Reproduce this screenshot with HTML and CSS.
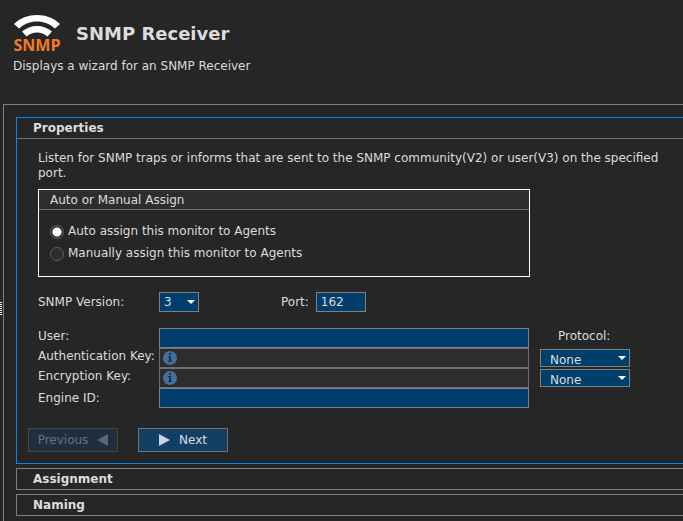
FILE: index.html
```html
<!DOCTYPE html>
<html lang="en">

<head>
  <meta charset="UTF-8" />
  <meta name="viewport" content="width=device-width, initial-scale=1.0" />
  <title>SNMP Receiver</title>
  <link rel="stylesheet" href="styles.css">
</head>

<body>

  <header class="page-header">
    <div class="brand">
      <svg class="logo" width="50" height="40" viewBox="0 0 50 40" aria-hidden="true">
        <path d="M1 10C13 -2 35 -2 47 10L42 14.500C32 5 16 5 6 14.500z" fill="#fff" />
        <path d="M9 17.500C17 10 31 10 39 17.500L34.500 22.500C28 17 20 17 13.500 22.500z" fill="#fff" />
        <text class="logo-text" x="24" y="37" text-anchor="middle">SNMP</text>
      </svg>
      <h1>SNMP Receiver</h1>
    </div>
    <p>Displays a wizard for an SNMP Receiver</p>
  </header>

  <main class="workspace">
    <div class="grip"></div>
    <form class="wizard">

      <section class="step active">
        <h2><button type="button" class="step-title">Properties</button></h2>
        <div class="step-body">
          <p class="intro">Listen for SNMP traps or informs that are sent to the SNMP community(V2) or user(V3) on the specified port.</p>

          <fieldset class="assign">
            <legend>Auto or Manual Assign</legend>
            <div class="options">
              <label><input type="radio" name="assign" checked>Auto assign this monitor to Agents</label>
              <label><input type="radio" name="assign">Manually assign this monitor to Agents</label>
            </div>
          </fieldset>

          <div class="connection">
            <label for="version">SNMP Version:</label>
            <select id="version" class="version">
              <option>1</option>
              <option>2</option>
              <option selected>3</option>
            </select>
            <label for="port" class="port-label">Port:</label>
            <input type="text" id="port" class="port" value="162">
          </div>

          <div class="credentials">
            <label for="user">User:</label>
            <input type="text" id="user">
            <span class="protocol-label">Protocol:</span>

            <label for="auth">Authentication Key:</label>
            <div class="key">
              <input type="password" id="auth">
              <svg class="info" width="14" height="14" viewBox="0 0 14 14" aria-hidden="true">
                <circle cx="7" cy="7" r="7" />
                <path d="M6 2h2v2H6zM5 5h3v5h1v1H5v-1h1V6H5z" />
              </svg>
            </div>
            <select aria-label="Authentication protocol" class="protocol">
              <option>None</option>
            </select>

            <label for="encryption">Encryption Key:</label>
            <div class="key">
              <input type="password" id="encryption">
              <svg class="info" width="14" height="14" viewBox="0 0 14 14" aria-hidden="true">
                <circle cx="7" cy="7" r="7" />
                <path d="M6 2h2v2H6zM5 5h3v5h1v1H5v-1h1V6H5z" />
              </svg>
            </div>
            <select aria-label="Encryption protocol" class="protocol">
              <option>None</option>
            </select>

            <label for="engine" class="engine-label">Engine ID:</label>
            <input type="text" id="engine">
          </div>

          <div class="actions">
            <button type="button" class="btn" disabled>
              Previous
              <svg width="11" height="12" viewBox="0 0 11 12" aria-hidden="true"><path d="M11 0v12L0 6z" /></svg>
            </button>
            <button type="button" class="btn next">
              <svg width="11" height="12" viewBox="0 0 11 12" aria-hidden="true"><path d="M0 0v12l11-6z" /></svg>
              Next
            </button>
          </div>
        </div>
      </section>

      <section class="step">
        <h2><button type="button" class="step-title">Assignment</button></h2>
      </section>

      <section class="step">
        <h2><button type="button" class="step-title">Naming</button></h2>
      </section>

    </form>
  </main>

</body>

</html>
```

FILE: styles.css
```css
* {
  box-sizing: border-box;
}

body {
  display: flex;
  flex-direction: column;
  min-height: 100vh;
  margin: 0;
  background: #262626;
  color: #dcdcdc;
  font-family: "DejaVu Sans", Verdana, sans-serif;
  font-size: 12px;
  line-height: 15px;
}

h1,
h2,
p {
  margin: 0;
}

button,
input,
select {
  margin: 0;
  color: inherit;
  font: inherit;
}

.page-header {
  padding: 14px 13px 30px;
}

.brand {
  display: flex;
  align-items: center;
  gap: 13px;
  margin-bottom: 5px;
}

.logo {
  overflow: visible;
}

.logo-text {
  fill: #f47b20;
  font-family: "Open Sans", sans-serif;
  font-size: 16px;
  font-weight: 700;
}

h1 {
  font-size: 18px;
  line-height: 24px;
}

.workspace {
  display: flex;
  flex: 1;
}

/* Drag handle on the left edge */
.grip {
  width: 3px;
  height: 13px;
  margin-top: 198px;
  padding-right: 1px;
  background: repeating-linear-gradient(#fff 0 1px, transparent 1px 2px) content-box;
}

.wizard {
  flex: 1;
  padding: 12px 0 5px 12px;
  border: solid #808080;
  border-width: 1px 0 0 1px;
}

.step {
  margin-bottom: 4px;
  border: 1px solid #808080;
  border-right: 0;
}

.step.active {
  border-color: #0a84e8;
}

.step h2 {
  font-size: 12px;
  line-height: 20px;
}

.step-title {
  display: block;
  width: 100%;
  padding: 0 16px;
  border: 0;
  background: none;
  font-weight: 700;
  text-align: left;
}

.active .step-title {
  border-bottom: 1px solid #707070;
}

.step-body {
  padding: 12px 11px 11px;
}

.intro {
  padding-left: 10px;
}

.assign {
  width: 492px;
  max-width: 100%;
  margin: 8px 0 0 10px;
  padding: 0;
  border: 1px solid #fff;
}

.assign legend {
  float: left;
  width: 100%;
  padding: 1px 11px 0;
  border-bottom: 1px solid #707070;
  background: #2d2d2d;
  line-height: 18px;
}

.options {
  display: flex;
  flex-direction: column;
  clear: both;
  gap: 7px;
  padding: 14px 11px 15px;
}

.options label {
  display: flex;
  align-items: center;
  gap: 4px;
}

.options input {
  appearance: none;
  width: 14px;
  height: 14px;
  border: 1px solid #606060;
  border-radius: 50%;
  background: #2d2d2d;
}

.options input:checked {
  background: radial-gradient(circle, #fff 0 4px, #2d2d2d 5px);
}

input[type="text"],
input[type="password"],
select {
  height: 20px;
  border: 1px solid #808080;
  border-radius: 0;
  background: #003e6b;
}

select {
  appearance: none;
  background: #003e6b url("data:image/svg+xml,%3Csvg xmlns='http://www.w3.org/2000/svg' width='8' height='4'%3E%3Cpath d='M0 0h8L4 4z' fill='%23fff'/%3E%3C/svg%3E") no-repeat right 3px center;
}

.connection {
  display: flex;
  align-items: center;
  margin: 15px 0 0 10px;
}

.connection label:first-child {
  width: 121px;
}

.version {
  width: 40px;
  padding: 0 4px;
}

.port-label {
  margin: 0 7px 0 82px;
}

.port {
  width: 50px;
  padding: 0 4px;
}

.credentials {
  display: grid;
  grid-template-columns: 121px 370px 101px;
  grid-auto-rows: 20px;
  margin: 16px 0 0 10px;
}

.credentials label,
.protocol-label {
  line-height: 16px;
}

.credentials .engine-label {
  align-self: center;
}

.protocol-label {
  padding-left: 29px;
}

.key {
  position: relative;
}

.key input,
.credentials > input {
  display: block;
  width: 100%;
}

.credentials .key input {
  padding-left: 20px;
  border-color: #707070;
  background: #2d2d2d;
}

.info {
  position: absolute;
  top: 3px;
  left: 4px;
}

.info circle {
  fill: #3f6fa3;
}

.info path {
  fill: #262f3a;
}

.credentials .protocol {
  width: 90px;
  height: 18px;
  margin: 1px 0 0 11px;
  padding: 3px 9px 0;
  background-position: right 3px top 6px;
}

.actions {
  display: flex;
  gap: 20px;
  margin-top: 20px;
}

.btn {
  display: flex;
  align-items: center;
  justify-content: center;
  gap: 9px;
  width: 90px;
  height: 24px;
  padding: 0;
  border: 1px solid #707070;
  background: #123f66;
}

.btn svg {
  fill: #c8d2dc;
}

.btn:disabled {
  border-color: #454545;
  background: #1f2f3f;
  color: #6c7074;
}

.btn:disabled svg {
  fill: #5f666d;
}
```
